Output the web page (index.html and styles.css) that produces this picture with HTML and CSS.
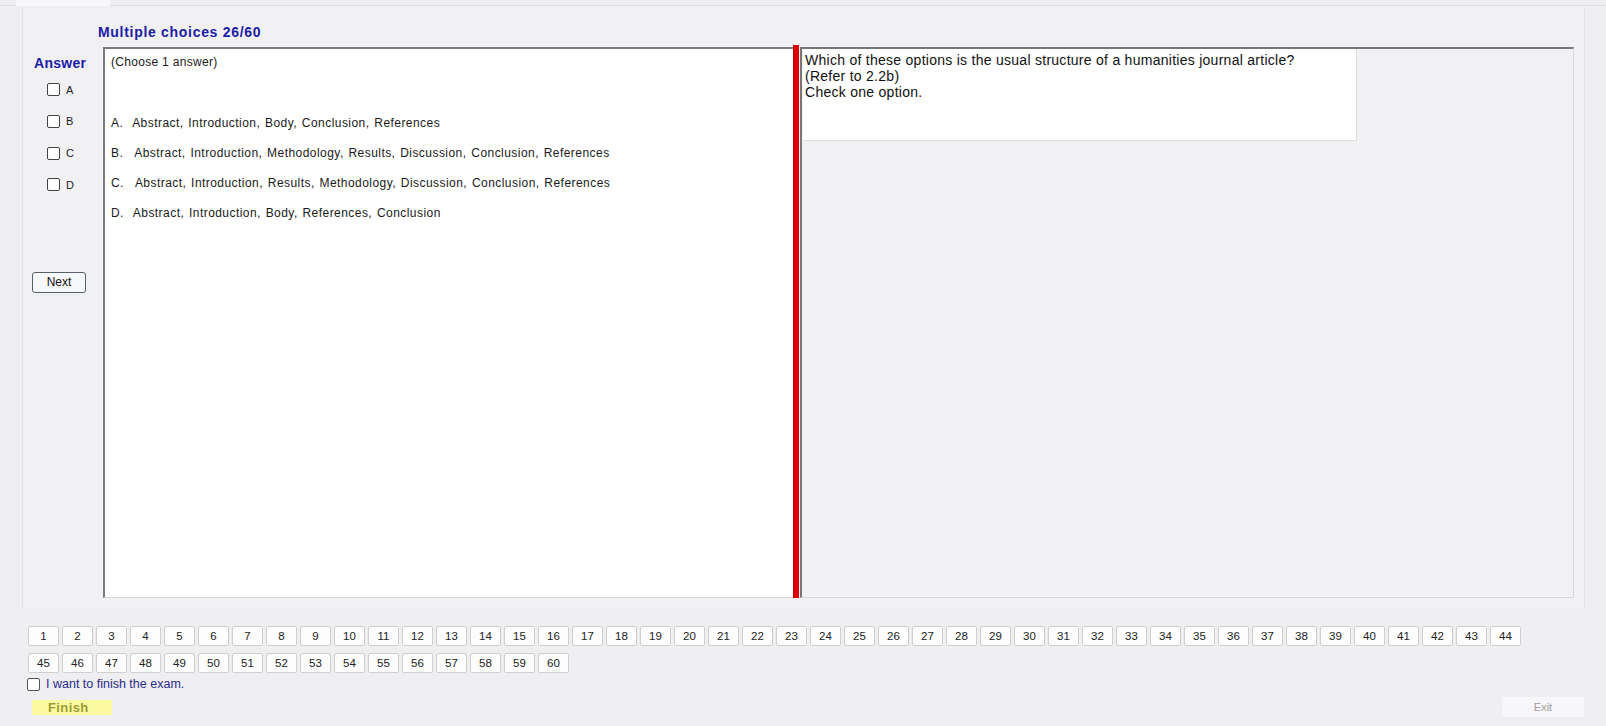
FILE: index.html
```html
<!DOCTYPE html>
<html>
<head>
<meta charset="utf-8">
<link rel="stylesheet" href="styles.css">
</head>
<body>
<div class="tabstrip"><div class="tab"></div></div>
<div class="group">
  <div class="title">Multiple choices 26/60</div>
  <div class="content">
    <div class="leftcol">
      <div class="answer">Answer</div>
      <div class="choices">
        <div class="choice"><span class="cb"></span><span>A</span></div>
        <div class="choice"><span class="cb"></span><span>B</span></div>
        <div class="choice"><span class="cb"></span><span>C</span></div>
        <div class="choice"><span class="cb"></span><span>D</span></div>
      </div>
      <div class="next">Next</div>
    </div>
    <div class="answers-box">
      <div class="hint">(Choose 1 answer)</div>
      <div class="opts">
        <div class="opt">A.  Abstract, Introduction, Body, Conclusion, References</div>
        <div class="opt">B.  &#8202;Abstract, Introduction, Methodology, Results, Discussion, Conclusion, References</div>
        <div class="opt">C.  &#8202;Abstract, Introduction, Results, Methodology, Discussion, Conclusion, References</div>
        <div class="opt">D.  Abstract, Introduction, Body, References, Conclusion</div>
      </div>
    </div>
    <div class="splitter"></div>
    <div class="question-pane">
      <div class="question">Which of these options is the usual structure of a humanities journal article?<br>(Refer to 2.2b)<br>Check one option.</div>
    </div>
  </div>
</div>
<div class="nav">
  <div class="navrow">
    <span class="nb">1</span><span class="nb">2</span><span class="nb">3</span><span class="nb">4</span><span class="nb">5</span><span class="nb">6</span><span class="nb">7</span><span class="nb">8</span><span class="nb">9</span><span class="nb">10</span><span class="nb">11</span><span class="nb">12</span><span class="nb">13</span><span class="nb">14</span><span class="nb">15</span><span class="nb">16</span><span class="nb">17</span><span class="nb">18</span><span class="nb">19</span><span class="nb">20</span><span class="nb">21</span><span class="nb">22</span><span class="nb">23</span><span class="nb">24</span><span class="nb">25</span><span class="nb">26</span><span class="nb">27</span><span class="nb">28</span><span class="nb">29</span><span class="nb">30</span><span class="nb">31</span><span class="nb">32</span><span class="nb">33</span><span class="nb">34</span><span class="nb">35</span><span class="nb">36</span><span class="nb">37</span><span class="nb">38</span><span class="nb">39</span><span class="nb">40</span><span class="nb">41</span><span class="nb">42</span><span class="nb">43</span><span class="nb">44</span>
  </div>
  <div class="navrow">
    <span class="nb">45</span><span class="nb">46</span><span class="nb">47</span><span class="nb">48</span><span class="nb">49</span><span class="nb">50</span><span class="nb">51</span><span class="nb">52</span><span class="nb">53</span><span class="nb">54</span><span class="nb">55</span><span class="nb">56</span><span class="nb">57</span><span class="nb">58</span><span class="nb">59</span><span class="nb">60</span>
  </div>
  <div class="finish-check"><span class="cb cb2"></span><span>I want to finish the exam.</span></div>
  <div class="actions">
    <div class="finish">Finish</div>
    <div class="exit">Exit</div>
  </div>
</div>
</body>
</html>
```
FILE: styles.css
```css
html, body {
  margin: 0;
  padding: 0;
}
body {
  width: 1606px;
  height: 726px;
  overflow: hidden;
  background: #efeef1;
  font-family: "Liberation Sans", Arial, sans-serif;
  color: #1a1a1a;
}
.tabstrip {
  height: 5px;
  border-bottom: 1px solid #dcdcdf;
}
.tab {
  width: 94px;
  height: 6px;
  margin-left: 16px;
  background: #f8f8fa;
}
.group {
  margin: 2px 0 0 22px;
  width: 1563px;
  height: 600px;
  box-sizing: border-box;
  border-left: 1px solid #e2e2e5;
  border-right: 1px solid #e2e2e5;
  background: #f1f0f3;
}
.title {
  padding: 16px 0 0 75px;
  height: 16px;
  line-height: 16px;
  font-size: 14px;
  font-weight: bold;
  letter-spacing: 0.7px;
  color: #1c1ca6;
}
.content {
  display: flex;
  margin-top: 5px;
  height: 553px;
}
.leftcol {
  width: 80px;
  padding-top: 10px;
  box-sizing: border-box;
}
.answer {
  padding-left: 11px;
  font-size: 14px;
  font-weight: bold;
  line-height: 16px;
  letter-spacing: 0.3px;
  color: #1c1ca6;
}
.choices {
  margin-top: 12px;
  padding-left: 24px;
}
.choice {
  display: flex;
  align-items: center;
  gap: 6px;
  height: 13px;
  margin-bottom: 18.8px;
  font-size: 11px;
  color: #222;
}
.cb {
  display: inline-block;
  width: 11px;
  height: 11px;
  border: 1px solid #444;
  border-radius: 2px;
  background: #fff;
}
.next {
  margin: 81px 0 0 9px;
  width: 52px;
  height: 19px;
  line-height: 19px;
  border: 1px solid #55606c;
  border-radius: 3px;
  background: #f6f8fa;
  text-align: center;
  font-size: 12px;
  color: #111;
}
.answers-box {
  margin-top: 2px;
  width: 690px;
  height: 551px;
  box-sizing: border-box;
  background: #fff;
  border-top: 2px solid #7c7c7c;
  border-left: 2px solid #7c7c7c;
  border-bottom: 1px solid #d8d8d8;
  padding: 6px 0 0 6px;
  font-size: 12px;
  color: #1a1a1a;
}
.hint {
  line-height: 14px;
  letter-spacing: 0.3px;
}
.opts {
  margin-top: 47px;
  display: flex;
  flex-direction: column;
  gap: 16px;
}
.opt {
  line-height: 14px;
  white-space: pre;
  letter-spacing: 0.45px;
  word-spacing: 1px;
}
.splitter {
  width: 6px;
  height: 553px;
  background: #e00000;
  border-left: 1px solid #b40000;
  box-sizing: border-box;
}
.question-pane {
  margin: 2px 0 0 1px;
  width: 774px;
  height: 551px;
  box-sizing: border-box;
  border-top: 2px solid #777;
  border-left: 2px solid #777;
  border-right: 1px solid #d8d8da;
  border-bottom: 1px solid #d8d8da;
  background: #f1f0f3;
  padding: 0 0 0 1px;
}
.question {
  width: 554px;
  height: 92px;
  box-sizing: border-box;
  background: #fff;
  border-right: 1px solid #dedede;
  border-bottom: 1px solid #dedede;
  padding: 3px 0 0 2px;
  font-size: 14px;
  line-height: 16px;
  letter-spacing: 0.27px;
  color: #111;
}
.nav {
  padding: 18px 0 0 28px;
}
.navrow {
  display: flex;
  gap: 3px;
  margin-bottom: 7px;
}
.nb {
  width: 31px;
  height: 20px;
  box-sizing: border-box;
  border: 1px solid #cfcfcf;
  border-radius: 2px;
  background: #fdfdfd;
  text-align: center;
  line-height: 18px;
  font-size: 11.5px;
  color: #222;
}
.finish-check {
  display: flex;
  align-items: center;
  gap: 6px;
  margin: -3px 0 0 -1px;
  height: 14px;
  font-size: 12.5px;
  color: #2a2a8a;
}
.cb2 {
  width: 11px;
  height: 11px;
  border-color: #555;
}
.actions {
  display: flex;
  align-items: center;
  justify-content: space-between;
  margin-top: 6px;
  width: 1556px;
}
.finish {
  margin-left: 4px;
  width: 80px;
  height: 15px;
  box-sizing: border-box;
  padding-left: 16px;
  line-height: 15px;
  background: #fbfaa0;
  font-size: 13px;
  font-weight: bold;
  letter-spacing: 0.4px;
  color: #9c9c34;
}
.exit {
  width: 82px;
  height: 20px;
  line-height: 20px;
  text-align: center;
  background: #f7f6f8;
  font-size: 11px;
  color: #a0a0a0;
}
```
